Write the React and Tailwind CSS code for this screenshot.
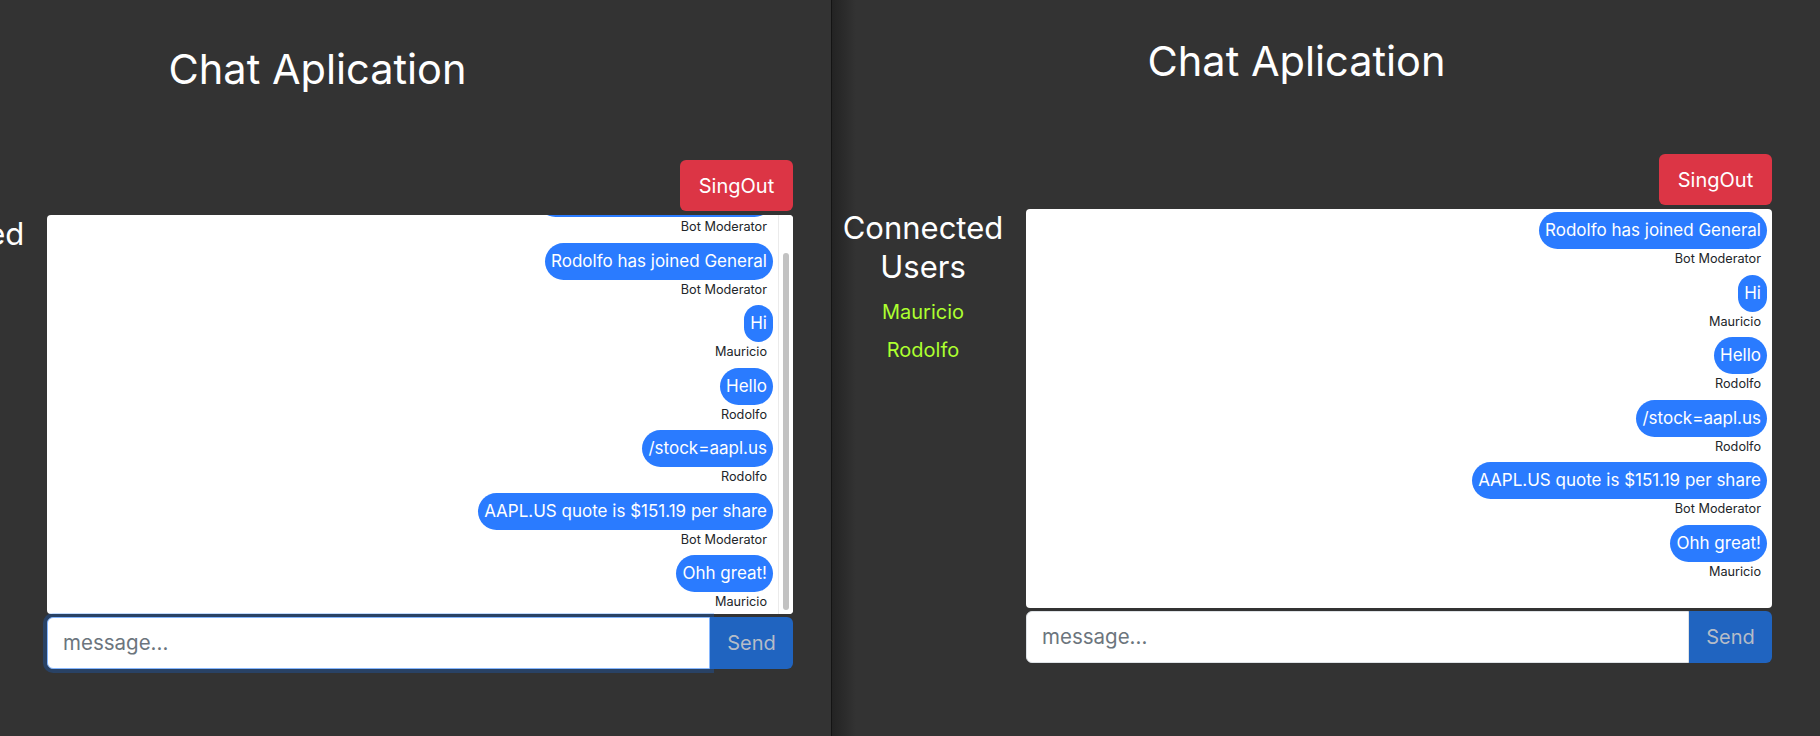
import { useLayoutEffect, useRef } from "react";

const base = [
  { t: "Rodolfo has joined General", u: "Bot Moderator" },
  { t: "Hi", u: "Mauricio" },
  { t: "Hello", u: "Rodolfo" },
  { t: "/stock=aapl.us", u: "Rodolfo" },
  { t: "AAPL.US quote is $151.19 per share", u: "Bot Moderator" },
  { t: "Ohh great!", u: "Mauricio" },
];
const leftMsgs = [{ t: "Mauricio has joined General", u: "Bot Moderator" }, ...base];

function Message({ t, u }) {
  return (
    <div className="flex flex-col items-end">
      <div className="h-[37px] px-[6px] rounded-full bg-[#2a7bff] text-white text-[17px] leading-[37px] whitespace-nowrap">
        {t}
      </div>
      <div className="pr-[6px] text-[12.7px] leading-[19.5px] text-[#212529] whitespace-nowrap">{u}</div>
    </div>
  );
}

function ChatApp({ messages, focused, scrollbar, topClass, btnClass }) {
  const ref = useRef(null);
  useLayoutEffect(() => {
    if (ref.current) ref.current.scrollTop = ref.current.scrollHeight;
  }, []);
  return (
    <div className={`w-[932px] shrink-0 ${topClass}`}>
      <h1 className="w-[913px] h-[48px] text-center text-[41.5px] leading-[48px] font-normal text-white whitespace-nowrap">
        Chat Aplication
      </h1>
      <div className={`flex justify-end ${btnClass}`}>
        <button className="w-[113px] h-[51px] rounded-[6px] bg-[#dc3545] text-white text-[20px]">SingOut</button>
      </div>
      <div className="flex gap-[20px] mt-[4px]">
        <div className="w-[166px] shrink-0 flex flex-col items-center text-center">
          <h2 className="text-[31px] leading-[38.5px] font-normal text-white mb-[11px] whitespace-nowrap">
            Connected
            <br />
            Users
          </h2>
          <div className="text-[20px] leading-[30px] text-[#adff2f] mb-[8px]">Mauricio</div>
          <div className="text-[20px] leading-[30px] text-[#adff2f]">Rodolfo</div>
        </div>
        <div className="w-[746px] shrink-0">
          <div className="flex h-[399px] bg-white rounded-[4px] overflow-hidden">
            <div ref={ref} className="flex-1 min-w-0 h-full overflow-hidden">
              <div className="flex flex-col items-end gap-[6px] pt-[3px] pb-[2px] px-[5px]">
                {messages.map((m, i) => (
                  <Message key={i} t={m.t} u={m.u} />
                ))}
              </div>
            </div>
            {scrollbar && (
              <div className="w-[15px] shrink-0 h-full bg-white border-l border-[#ebebeb] flex flex-col justify-end pl-[4px] pr-[4px] pb-[4px]">
                <div className="w-[6px] h-[357px] rounded-full bg-[#c2c2c2]" />
              </div>
            )}
          </div>
          <div className="flex h-[52px] mt-[3px]">
            <input
              placeholder="message..."
              className={
                focused
                  ? "relative flex-1 min-w-0 bg-white border border-[#86b7fe] rounded-l-[6px] px-[15px] text-[20.5px] text-[#212529] placeholder:text-[#6c757d] outline-none shadow-[0_0_0_4px_rgba(13,110,253,0.25)]"
                  : "relative flex-1 min-w-0 bg-white border border-[#dee2e6] rounded-l-[6px] px-[15px] text-[20.5px] text-[#212529] placeholder:text-[#6c757d] outline-none"
              }
            />
            <button className="relative z-10 w-[83px] h-[52px] bg-[#2064c0] text-[#b5bcc8] rounded-r-[6px] text-[20px]">
              Send
            </button>
          </div>
        </div>
      </div>
    </div>
  );
}

export default function App() {
  return (
    <div className="flex w-[1820px] h-[736px] bg-[#333333] overflow-hidden font-[Inter,'Liberation_Sans',sans-serif]">
      <div className="w-[831px] shrink-0 h-full overflow-hidden flex">
        <div className="ml-[-139px]">
          <ChatApp messages={leftMsgs} focused scrollbar topClass="pt-[45px]" btnClass="mt-[67px]" />
        </div>
      </div>
      <div className="w-px shrink-0 h-full bg-[#141414]" />
      <div className="flex-1 h-full overflow-hidden flex pl-[8px] bg-[linear-gradient(to_right,#232323,#333333_24px)]">
        <ChatApp messages={base} focused={false} scrollbar={false} topClass="pt-[37px]" btnClass="mt-[69px]" />
      </div>
    </div>
  );
}
